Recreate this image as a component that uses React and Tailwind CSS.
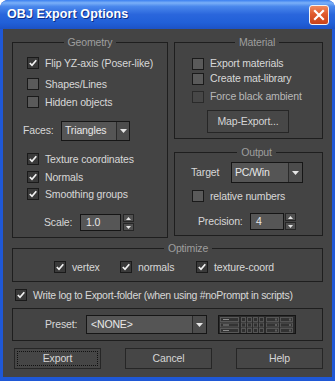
import React from "react";

const Check = ({ checked, disabled }) => (
  <span
    className={
      checked
        ? "w-[12px] h-[12px] shrink-0 border border-[#1a1a1a] bg-[#3a3a3a] flex items-center justify-center"
        : disabled
        ? "w-[12px] h-[12px] shrink-0 border border-[#2a2a2a] bg-[#474747]"
        : "w-[12px] h-[12px] shrink-0 border border-[#1a1a1a] bg-[#5a5a5a]"
    }
  >
    {checked && (
      <svg width="10" height="10" viewBox="0 0 10 10">
        <path d="M1.8 5 L4 7.3 L8.3 2.2" stroke="#f2f2f2" strokeWidth="1.7" fill="none" />
      </svg>
    )}
  </span>
);

const Row = ({ checked, disabled, children, className }) => (
  <div className={"flex items-center gap-[6px] " + (className || "")}>
    <Check checked={checked} disabled={disabled} />
    <span className={disabled ? "text-[#b8b8b8] leading-none" : "leading-none"}>{children}</span>
  </div>
);

const Arrow = () => (
  <svg width="7" height="4" viewBox="0 0 7 4">
    <path d="M0 0 H7 L3.5 4 Z" fill="#e6e6e6" />
  </svg>
);

const Spinner = () => (
  <div className="w-[11px] h-[17px] flex flex-col gap-[1px] shrink-0">
    <span className="flex-1 bg-[#505050] border border-[#262626] flex items-center justify-center">
      <svg width="5" height="3" viewBox="0 0 5 3"><path d="M0 3 H5 L2.5 0 Z" fill="#e6e6e6" /></svg>
    </span>
    <span className="flex-1 bg-[#505050] border border-[#262626] flex items-center justify-center">
      <svg width="5" height="3" viewBox="0 0 5 3"><path d="M0 0 H5 L2.5 3 Z" fill="#e6e6e6" /></svg>
    </span>
  </div>
);

const Legend = ({ children }) => (
  <legend className="mx-auto px-[4px] leading-[14px] text-[#9e9e9e]">{children}</legend>
);

const GridIcon = () => {
  const rows = [2, 7.5, 13];
  return (
    <svg width="78" height="19" viewBox="0 0 78 19">
      <rect x="0.5" y="0.5" width="77" height="18" fill="#2b2b2b" stroke="#151515" />
      {rows.map((y, i) => (
        <g key={i}>
          <rect x="2.5" y={y + 0.5} width="18" height="4" fill="#333" stroke="#585858" strokeWidth="1" />
          <line x1="5" y1={y + 2.5} x2="11" y2={y + 2.5} stroke="#8a8a8a" strokeWidth="1" />
          {[23, 29, 35, 41].map((x) => (
            <rect key={x} x={x + 0.5} y={y + 0.5} width="4" height="4" fill="#303030" stroke="#555" strokeWidth="1" />
          ))}
          <rect x="48.5" y={y + 0.5} width="12" height="4" fill="#333" stroke="#555" strokeWidth="1" />
          <line x1="58" y1={y + 1.5} x2="58" y2={y + 3.5} stroke="#8a8a8a" strokeWidth="1" />
          <rect x="62.5" y={y + 0.5} width="12" height="4" fill="#333" stroke="#555" strokeWidth="1" />
          <line x1="72" y1={y + 1.5} x2="72" y2={y + 3.5} stroke="#8a8a8a" strokeWidth="1" />
        </g>
      ))}
    </svg>
  );
};

const Button = ({ children, focus }) => (
  <div className="w-[87px] h-[21px] border border-[#262626] bg-[#464646] p-[2px] flex">
    <div
      className={
        focus
          ? "flex-1 border border-dotted border-[#111] flex items-center justify-center text-[#d6d6d6]"
          : "flex-1 flex items-center justify-center text-[#d6d6d6]"
      }
    >
      {children}
    </div>
  </div>
);

export default function App() {
  return (
    <div className="w-[335px] h-[381px] bg-[#1f58d6] rounded-t-[8px] flex flex-col overflow-hidden font-['Liberation_Sans',Arial,sans-serif] text-[10.5px] tracking-[-0.15px] whitespace-nowrap text-[#d8d8d8] select-none">
      <div className="h-[29px] shrink-0 flex items-center pl-[7px] pr-[6px] rounded-t-[8px] bg-[linear-gradient(to_bottom,#3a7ff0_0%,#7ab0f8_10%,#4a88ec_22%,#2a66dc_50%,#2160d8_78%,#1c52c6_100%)]">
        <span className="flex-1 text-white font-bold text-[12.5px] tracking-[0.1px] [text-shadow:1px_1px_0_#0d2f86]">
          OBJ Export Options
        </span>
        <div className="w-[20px] h-[20px] mt-[1px] rounded-[3px] border border-[#f4f4f4] bg-[linear-gradient(to_bottom,#f08a5e,#e05a2c_45%,#c8421a)] flex items-center justify-center">
          <svg width="12" height="12" viewBox="0 0 12 12">
            <path d="M2 2 L10 10 M10 2 L2 10" stroke="#ffffff" strokeWidth="2.2" strokeLinecap="square" />
          </svg>
        </div>
      </div>

      <div className="flex-1 mx-[3px] mb-[4px] bg-[#444444] flex flex-col px-[9px] pt-[6px]">
        <div className="flex gap-[6px]">
          <fieldset className="w-[156px] h-[203px] border border-[#1e1e1e] px-[10px]">
            <Legend>Geometry</Legend>
            <Row checked className="ml-[4px] mt-[6px] h-[16px]">Flip YZ-axis (Poser-like)</Row>
            <Row className="ml-[4px] mt-[5px] h-[16px]">Shapes/Lines</Row>
            <Row className="ml-[4px] mt-[2px] h-[16px]">Hidden objects</Row>
            <div className="mt-[11px] h-[20px] flex items-center">
              <span className="w-[38px]">Faces:</span>
              <div className="w-[69px] h-[20px] border border-[#161616] bg-[#555555] flex">
                <span className="flex-1 flex items-center pl-[3px] text-[#e8e8e8]">Triangles</span>
                <span className="w-[13px] border-l border-[#2a2a2a] bg-[#4c4c4c] flex items-center justify-center">
                  <Arrow />
                </span>
              </div>
            </div>
            <Row checked className="ml-[4px] mt-[10px] h-[16px]">Texture coordinates</Row>
            <Row checked className="ml-[4px] mt-[2px] h-[16px]">Normals</Row>
            <Row checked className="ml-[4px] mt-[1px] h-[16px]">Smoothing groups</Row>
            <div className="mt-[12px] h-[17px] flex items-center pl-[21px]">
              <span className="w-[36px]">Scale:</span>
              <div className="w-[41px] h-[17px] border border-[#151515] bg-[#565656] flex items-center pl-[5px] text-[#e8e8e8]">
                1.0
              </div>
              <div className="ml-[2px]">
                <Spinner />
              </div>
            </div>
          </fieldset>

          <div className="w-[149px] flex flex-col gap-[6px]">
            <fieldset className="h-[104px] border border-[#1e1e1e] pl-[17px]">
              <Legend>Material</Legend>
              <Row className="mt-[7px] h-[15px]">Export materials</Row>
              <Row className="h-[15px]">Create mat-library</Row>
              <Row disabled className="mt-[3px] h-[15px]">Force black ambient</Row>
              <div className="mt-[6px] ml-[15px] w-[82px] h-[23px] border border-[#262626] bg-[#474747] flex items-center justify-center text-[#d6d6d6]">
                Map-Export...
              </div>
            </fieldset>
            <fieldset className="h-[91px] border border-[#1e1e1e] pl-[16px]">
              <Legend>Output</Legend>
              <div className="mt-[3px] h-[21px] flex items-center">
                <span className="w-[40px]">Target</span>
                <div className="w-[72px] h-[21px] border border-[#161616] bg-[#555555] flex">
                  <span className="flex-1 flex items-center pl-[3px] text-[#e8e8e8]">PC/Win</span>
                  <span className="w-[14px] border-l border-[#2a2a2a] bg-[#4c4c4c] flex items-center justify-center">
                    <Arrow />
                  </span>
                </div>
              </div>
              <Row className="ml-[1px] mt-[5px] h-[16px]">relative numbers</Row>
              <div className="mt-[9px] h-[17px] flex items-center pl-[7px]">
                <span className="w-[52px]">Precision:</span>
                <div className="w-[34px] h-[17px] border border-[#151515] bg-[#565656] flex items-center pl-[5px] text-[#e8e8e8]">
                  4
                </div>
                <div className="ml-[1px]">
                  <Spinner />
                </div>
              </div>
            </fieldset>
          </div>
        </div>

        <fieldset className="mt-[3px] h-[41px] border border-[#1e1e1e] pl-[41px]">
          <Legend>Optimize</Legend>
          <div className="mt-[4px] h-[16px] flex items-center">
            <Row checked className="w-[66px]">vertex</Row>
            <Row checked className="w-[76px]">normals</Row>
            <Row checked>texture-coord</Row>
          </div>
        </fieldset>

        <Row checked className="mt-[5px] ml-[3px] h-[16px] tracking-[-0.3px]">
          Write log to Export-folder (when using #noPrompt in scripts)
        </Row>

        <div className="mt-[5px] h-[33px] border border-[#1e1e1e] flex items-center pl-[32px]">
          <span className="w-[41px]">Preset:</span>
          <div className="w-[121px] h-[19px] border border-[#161616] bg-[#555555] flex">
            <span className="flex-1 flex items-center pl-[4px] text-[#e8e8e8]">&lt;NONE&gt;</span>
            <span className="w-[14px] border-l border-[#2a2a2a] bg-[#4c4c4c] flex items-center justify-center">
              <Arrow />
            </span>
          </div>
          <div className="ml-[11px] flex">
            <GridIcon />
          </div>
        </div>

        <div className="mt-[7px] h-[21px] flex justify-between pl-[2px]">
          <Button focus>Export</Button>
          <Button>Cancel</Button>
          <Button>Help</Button>
        </div>
      </div>
    </div>
  );
}
